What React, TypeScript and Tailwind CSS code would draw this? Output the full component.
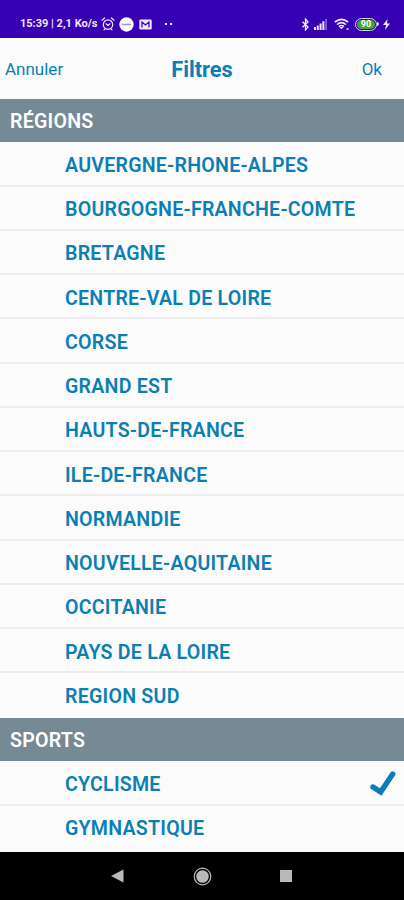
import clsx from "clsx";

const sections = [
  {
    title: "RÉGIONS",
    items: [
      "AUVERGNE-RHONE-ALPES",
      "BOURGOGNE-FRANCHE-COMTE",
      "BRETAGNE",
      "CENTRE-VAL DE LOIRE",
      "CORSE",
      "GRAND EST",
      "HAUTS-DE-FRANCE",
      "ILE-DE-FRANCE",
      "NORMANDIE",
      "NOUVELLE-AQUITAINE",
      "OCCITANIE",
      "PAYS DE LA LOIRE",
      "REGION SUD",
    ],
  },
  { title: "SPORTS", items: ["CYCLISME", "GYMNASTIQUE"] },
];

const selected = ["CYCLISME"];

function StatusBar() {
  return (
    <div className="h-[37.5px] shrink-0 bg-[#3700b3] pt-[11px] text-[#eee6ff]">
      <div className="flex h-[26px] items-center pl-5">
        <span className="w-[79px] whitespace-nowrap pt-px text-[11px] font-bold">
          15:39 | 2,1 Ko/s
        </span>
        {/* Alarm */}
        <svg className="ml-[2px] h-[14px] w-[14px]" viewBox="0 0 14 14" fill="none" stroke="currentColor" strokeWidth="1.2">
          <circle cx="7" cy="7.6" r="4.7" />
          <path d="M1 3.2 3.6 1M13 3.2 10.4 1M3 12.8l1-1M11 12.8l-1-1M5 6.8l2 1.7 2-1.7" strokeLinecap="round" />
        </svg>
        {/* Do not disturb */}
        <svg className="ml-[4px] h-[15px] w-[15px]" viewBox="0 0 15 15">
          <circle cx="7.5" cy="7.5" r="7.2" fill="#fff" />
          <path d="M3 7.5h9" stroke="#a391dc" strokeWidth="1.6" />
        </svg>
        {/* Mail */}
        <svg className="ml-[5px] h-[11px] w-[13px]" viewBox="0 0 13 11">
          <rect x=".3" y=".5" width="12.4" height="10" rx="1.2" fill="currentColor" />
          <path d="M3 8.5V3l3.5 3L10 3v5.5" fill="none" stroke="#3700b3" strokeWidth="1.2" />
        </svg>
        <span className="ml-[13px] h-[2px] w-[2px] bg-current" />
        <span className="ml-[3px] h-[2px] w-[2px] bg-current" />
        {/* Bluetooth */}
        <svg className="ml-auto h-[13px] w-[9px]" viewBox="0 0 9 13" fill="none" stroke="currentColor" strokeWidth="1.3">
          <path d="M1.5 3.7 7 9 4.5 12V1L7 4 1.5 9.3" />
        </svg>
        {/* Signal */}
        <svg className="ml-[4px] h-[11px] w-[13px]" viewBox="0 0 13 11" fill="currentColor">
          <path d="M0 8h2v3H0zM2.8 6.5h2V11h-2zM5.6 4.5h2V11h-2zM8.4 2.3h2V11h-2z" />
          <path d="M11.2 0h1.8v11h-1.8z" opacity=".4" />
        </svg>
        {/* Wifi */}
        <svg className="ml-[7px] h-[13px] w-[16px]" viewBox="0 0 16 13" fill="none" stroke="currentColor">
          <path d="M.8 4.2Q7.5-1.6 14.2 4.2M3 6.5q4.5-3.9 9 0M5 8.6q2.5-2.2 5 0" strokeWidth="1.6" />
          <path d="m5.4 9 2.1 2.3L9.6 9z" fill="currentColor" stroke="none" />
          <path d="M12.5 11h2" strokeWidth="1.5" />
        </svg>
        {/* Battery */}
        <div className="ml-[5px] flex h-[13px] w-[22px] items-center justify-center rounded-full border border-[#d5cdf0] p-px">
          <span className="flex h-full w-full items-center justify-center rounded-full bg-[#43a62c] text-[9px] leading-none font-bold text-white">
            90
          </span>
        </div>
        <span className="h-[4px] w-[2px] rounded-r bg-[#d5cdf0]" />
        <svg className="mr-[14px] ml-[4px] h-[11px] w-[7px]" viewBox="0 0 7 11" fill="currentColor">
          <path d="M4.5 0 0 6h3L2 11l5-6.5H4z" />
        </svg>
      </div>
    </div>
  );
}

function CheckMark() {
  return (
    <svg className="mt-[2px] h-[27px] w-[28px]" viewBox="0 0 28 27" fill="none" stroke="#0a7dba" strokeWidth="5.4">
      <path d="M4 17 11.7 22 23.7 4" strokeLinecap="round" />
    </svg>
  );
}

function Row({ label, checked, last }: { label: string; checked: boolean; last: boolean }) {
  return (
    <li
      className={clsx(
        "flex h-[44.25px] items-center justify-between pr-[7px] pl-[65px]",
        !last && "border-b-2 border-[#ededed]"
      )}
    >
      <span
        className={clsx(
          "text-[19.6px] leading-6 font-semibold tracking-[0.23px] whitespace-nowrap",
          last ? "pt-[3px]" : "pt-[5px]"
        )}
      >
        {label}
      </span>
      {checked && <CheckMark />}
    </li>
  );
}

export default function App() {
  return (
    <div className="flex h-[900px] w-[404px] flex-col overflow-hidden bg-[#fbfbfb] font-['Roboto',sans-serif] text-[#0b7fb4]">
      <StatusBar />
      <header className="grid h-[61px] shrink-0 grid-cols-3 items-center pt-[3px] pr-[22px] pl-[5px]">
        <button type="button" className="text-left text-[17px]">
          Annuler
        </button>
        <h1 className="pt-px pl-[17px] text-center text-[21.8px] font-bold">Filtres</h1>
        <button type="button" className="text-right text-[17px]">
          Ok
        </button>
      </header>

      <main className="min-h-0 flex-1 overflow-hidden">
        {sections.map((section) => (
          <section key={section.title}>
            <h2 className="flex h-[43.75px] items-center bg-[#758a94] pt-[3px] pl-[10px] text-[19.6px] font-semibold tracking-[0.23px] text-white">
              {section.title}
            </h2>
            <ul>
              {section.items.map((item, i) => (
                <Row
                  key={item}
                  label={item}
                  checked={selected.includes(item)}
                  last={i === section.items.length - 1}
                />
              ))}
            </ul>
          </section>
        ))}
      </main>

      {/* Android navigation bar */}
      <nav className="flex h-[48px] shrink-0 items-center bg-black pl-[110px]">
        <svg className="h-[14px] w-[14px]" viewBox="0 0 14 14" fill="#b9b9b9">
          <path d="M13.5.5v13L1 7z" />
        </svg>
        <svg className="ml-[69px] h-[19px] w-[19px]" viewBox="0 0 19 19">
          <circle cx="9.5" cy="9.5" r="8.3" fill="none" stroke="#b9b9b9" strokeWidth="1.2" />
          <circle cx="9.5" cy="9.5" r="6.3" fill="#b9b9b9" />
        </svg>
        <span className="ml-[68px] h-[12px] w-[12px] bg-[#b9b9b9]" />
      </nav>
    </div>
  );
}
